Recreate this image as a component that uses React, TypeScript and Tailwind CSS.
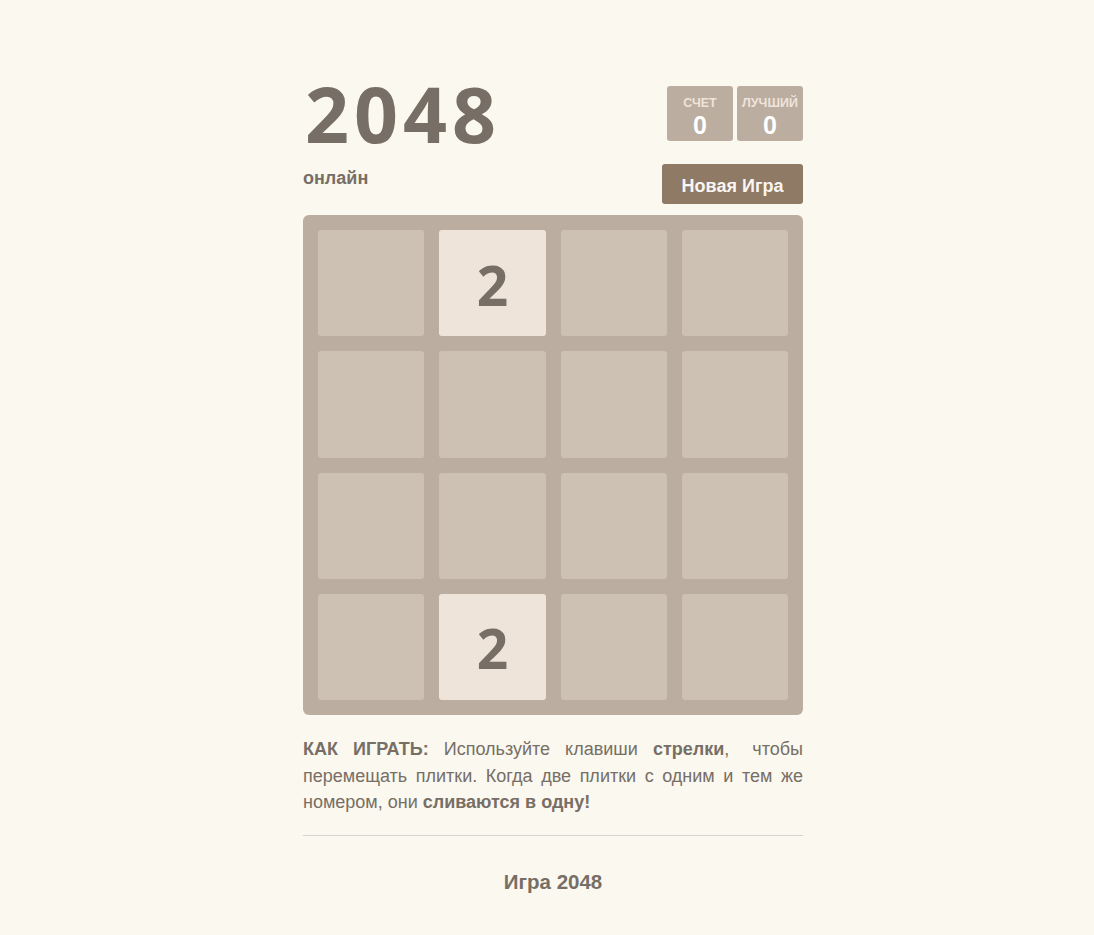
import React from "react";

const grid = [
  [0, 2, 0, 0],
  [0, 0, 0, 0],
  [0, 0, 0, 0],
  [0, 2, 0, 0],
];

export default function App() {
  return (
    <div
      className="min-h-[935px] w-full bg-[#faf8ef] pl-[12px] text-[#776e65]"
      style={{ fontFamily: '"Liberation Sans", Arial, sans-serif' }}
    >
      <div className="mx-auto w-[500px] pt-[68px]">
        <div className="flex items-start justify-between">
          <h1
            className="m-0 ml-[2px] text-[77px] font-bold leading-[92px] tracking-[5px] text-[#776e65]"
            style={{ fontFamily: '"Open Sans", sans-serif' }}
          >
            2048
          </h1>
          <div className="mt-[18px] flex gap-[4px]">
            <div className="flex h-[55px] w-[66px] flex-col items-center rounded-[3px] bg-[#bbada0] pt-[10px]">
              <div className="text-[12.5px] font-bold leading-[14px] text-[#eee4da]">СЧЕТ</div>
              <div className="mt-[1px] text-[25px] font-bold leading-[28px] text-white">0</div>
            </div>
            <div className="flex h-[55px] w-[66px] flex-col items-center rounded-[3px] bg-[#bbada0] pt-[10px]">
              <div className="text-[12.5px] font-bold leading-[14px] text-[#eee4da]">ЛУЧШИЙ</div>
              <div className="mt-[1px] text-[25px] font-bold leading-[28px] text-white">0</div>
            </div>
          </div>
        </div>
        <div className="mt-[4px] flex items-start justify-between">
          <p className="mt-[2px] text-[18px] font-bold leading-[24px]">онлайн</p>
          <button className="h-[40px] w-[141px] rounded-[3px] bg-[#8f7a66] pt-[4px] text-[18px] font-bold text-[#f9f6f2]">
            Новая Игра
          </button>
        </div>
        <div className="mt-[11px] grid h-[500px] w-[500px] grid-cols-4 grid-rows-4 gap-[15px] rounded-[6px] bg-[#bbada0] p-[15px]">
          {grid.flat().map((v, i) => (
            <div
              key={i}
              className={
                "flex items-center justify-center rounded-[3px] " +
                (v ? "bg-[#eee4da]" : "bg-[#cdc1b4]")
              }
            >
              {v ? (
                <span
                  className="pt-[2px] text-[55px] font-bold leading-none text-[#776e65]"
                  style={{ fontFamily: '"Open Sans", sans-serif' }}
                >
                  {v}
                </span>
              ) : null}
            </div>
          ))}
        </div>
        <p className="mt-[21px] text-justify text-[18px] leading-[26.5px]">
          <strong>КАК ИГРАТЬ:</strong> Используйте клавиши <strong>стрелки</strong>,
          <span className="inline-block w-[8px]" /> чтобы перемещать плитки. Когда две плитки с
          одним и тем же номером, они <strong>сливаются в одну!</strong>
        </p>
        <hr className="mt-[19px] border-0 border-t border-[#d8d4d0]" />
        <div className="mt-[31px] text-center text-[20.5px] font-bold">Игра 2048</div>
      </div>
    </div>
  );
}
